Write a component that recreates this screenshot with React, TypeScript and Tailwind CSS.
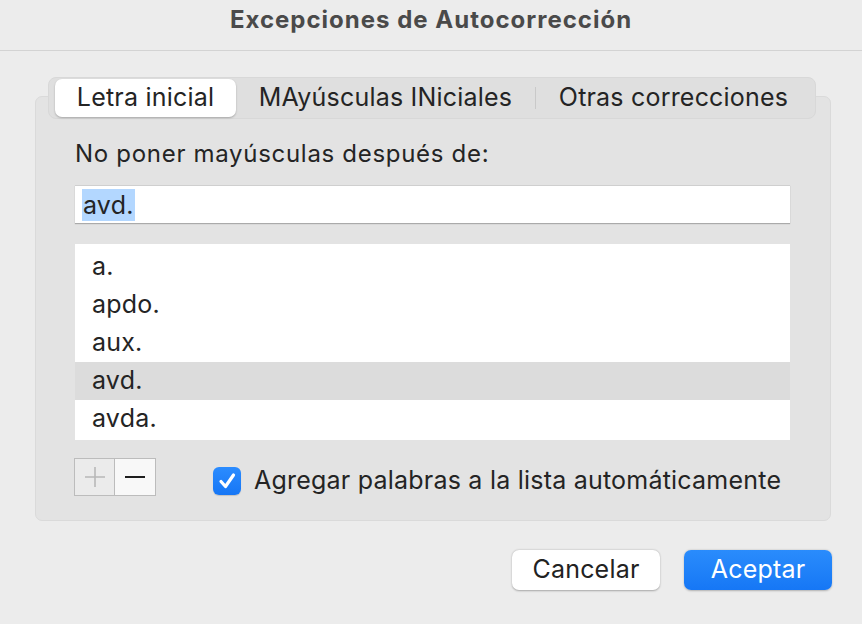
import React from "react";

export default function App() {
  const items = ["a.", "apdo.", "aux.", "avd.", "avda."];
  return (
    <div className="w-[862px] h-[624px] bg-[#ececec] font-['Inter','Liberation_Sans',sans-serif] text-[#242424] overflow-hidden">
      <div className="h-[51px] border-b border-[#d3d3d3] flex items-center justify-center pb-[10px]">
        <span className="text-[24px] font-bold text-[#4a4a4a] tracking-[1px]">Excepciones de Autocorrección</span>
      </div>
      <div className="ml-[35px] mr-[31px] mt-[45px] h-[425px] rounded-[7px] bg-[#e3e3e3] border border-[#dadada] flex flex-col">
        <div className="-mt-[20px] ml-[12px] mr-[14px] h-[42px] rounded-[8px] bg-[#dfdfdf] border border-[#d8d8d8] flex items-center pl-[6px] pr-[4px]">
          <div className="w-[181px] h-[38px] rounded-[7px] bg-white shadow-[0_1px_2px_rgba(0,0,0,0.25)] flex items-center justify-center text-[25px] tracking-[0.2px]">
            Letra inicial
          </div>
          <div className="w-[299px] h-[38px] flex items-center justify-center text-[25px] tracking-[0.2px]">MAyúsculas INiciales</div>
          <div className="w-[1px] h-[22px] bg-[#c9c9c9]"></div>
          <div className="flex-1 h-[38px] flex items-center justify-center text-[25px] tracking-[0.2px]">Otras correcciones</div>
        </div>
        <div className="pl-[39px] pr-[40px] flex flex-col">
          <div className="mt-[20px] h-[30px] flex items-center text-[24px] tracking-[0.7px]">No poner mayúsculas después de:</div>
          <div className="mt-[16px] h-[38px] bg-white border-t border-[#cfcfcf] shadow-[0_1px_1px_rgba(0,0,0,0.25)] flex items-center pl-[7px]">
            <span className="bg-[#b3d7ff] text-[25px] leading-[32px] px-[1px] tracking-[0.2px]">avd.</span>
          </div>
          <div className="mt-[21px] h-[196px] bg-white pt-[4px]">
            {items.map((it, i) => (
              <div
                key={it}
                className={
                  "h-[38px] flex items-center pl-[17px] text-[25px] tracking-[0.2px] " + (i === 3 ? "bg-[#dcdcdc]" : "")
                }
              >
                {it}
              </div>
            ))}
          </div>
          <div className="mt-[18px] flex items-end">
            <div className="flex -ml-[1px]">
              <div className="w-[41px] h-[38px] border border-[#bcbcbc] bg-[#ebebeb] flex items-center justify-center">
                <svg width="22" height="22" viewBox="0 0 22 22">
                  <path d="M11 1v20M1 11h20" stroke="#b8b8b8" strokeWidth="1.6" />
                </svg>
              </div>
              <div className="w-[41px] h-[38px] border border-l-0 border-[#bcbcbc] bg-[#f8f8f8] flex items-center justify-center">
                <svg width="22" height="4" viewBox="0 0 22 4">
                  <path d="M1 2h20" stroke="#1e1e1e" strokeWidth="2" />
                </svg>
              </div>
            </div>
            <div className="ml-[57px] flex items-center h-[30px]">
              <div className="w-[28px] h-[28px] rounded-[6px] bg-gradient-to-b from-[#2b8cff] to-[#1676f5] flex items-center justify-center shadow-[0_1px_1px_rgba(0,0,0,0.15)]">
                <svg width="20" height="18" viewBox="0 0 20 18">
                  <path d="M4 9.5l4.5 5L16.5 3" fill="none" stroke="white" strokeWidth="3.2" strokeLinecap="round" strokeLinejoin="round" />
                </svg>
              </div>
              <span className="ml-[13px] text-[25px] tracking-[0.22px] -mt-[1px]">Agregar palabras a la lista automáticamente</span>
            </div>
          </div>
        </div>
      </div>
      <div className="mt-[29px] flex justify-end pr-[30px] gap-[24px]">
        <div className="w-[148px] h-[40px] rounded-[7px] bg-white shadow-[0_0.5px_2px_rgba(0,0,0,0.3)] flex items-center justify-center text-[25px] tracking-[0.2px] text-[#222]">
          Cancelar
        </div>
        <div className="w-[148px] h-[40px] rounded-[7px] bg-gradient-to-b from-[#2a8cfc] to-[#1677f5] shadow-[0_0.5px_2px_rgba(0,0,0,0.25)] flex items-center justify-center text-[25px] tracking-[0.2px] text-white">
          Aceptar
        </div>
      </div>
    </div>
  );
}
